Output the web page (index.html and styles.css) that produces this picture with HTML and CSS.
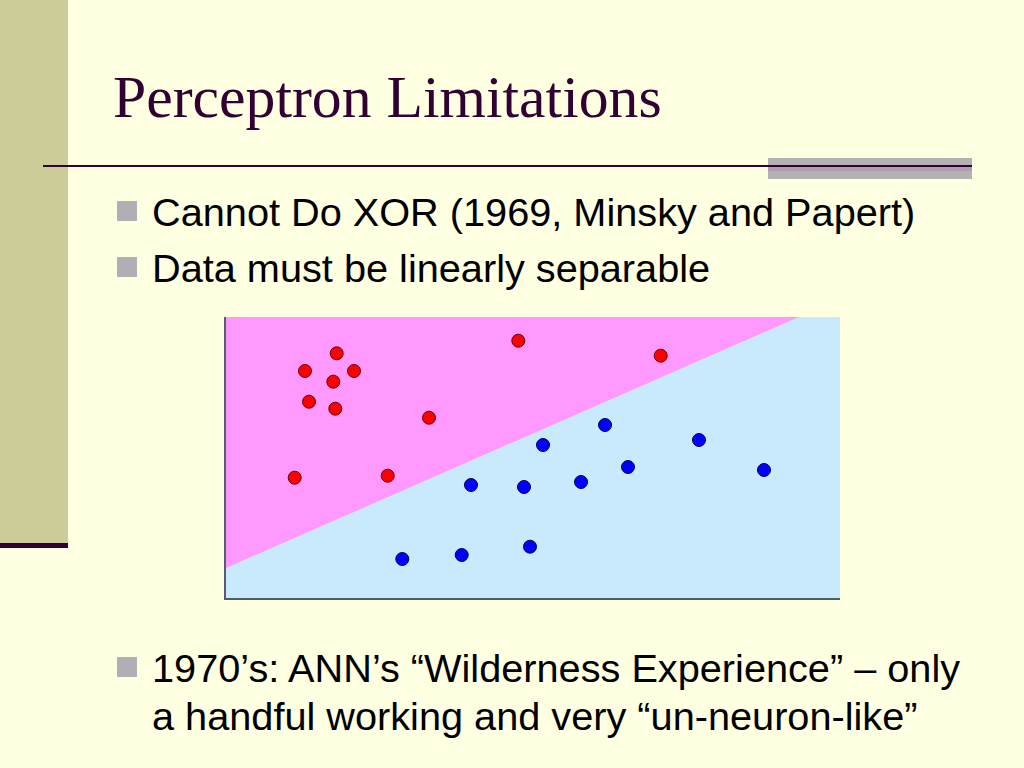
FILE: index.html
```html
<!DOCTYPE html>
<html lang="en">
<head>
<meta charset="utf-8">
<title>Perceptron Limitations</title>
<link rel="stylesheet" href="styles.css">
</head>
<body>
<div class="slide">
  <div class="sidebar"></div>
  <div class="main">
    <h1 class="title">Perceptron Limitations</h1>
    <div class="rule"></div>
    <ul class="bullets">
      <li>Cannot Do XOR (1969, Minsky and Papert)</li>
      <li>Data must be linearly separable</li>
    </ul>
    <div class="chart">
      <svg width="614" height="281" viewBox="0 0 614 281">
        <rect x="0" y="0" width="614" height="281" fill="#c9e9fd"/>
        <polygon points="0,0 573,0 0,251" fill="#ff99ff"/>
        <g fill="#ff0000" stroke="#6a0000" stroke-width="1">
          <circle cx="110.7" cy="36.3" r="6.5"/>
          <circle cx="79" cy="54" r="6.5"/>
          <circle cx="128" cy="54" r="6.5"/>
          <circle cx="107.3" cy="64.7" r="6.5"/>
          <circle cx="83" cy="84.7" r="6.5"/>
          <circle cx="109.3" cy="91.7" r="6.5"/>
          <circle cx="203" cy="100.7" r="6.5"/>
          <circle cx="68.7" cy="160.7" r="6.5"/>
          <circle cx="161.7" cy="158.7" r="6.5"/>
          <circle cx="292.3" cy="23.7" r="6.5"/>
          <circle cx="434.7" cy="38.7" r="6.5"/>
        </g>
        <g fill="#0000ff" stroke="#00005a" stroke-width="1">
          <circle cx="245" cy="168" r="6.5"/>
          <circle cx="298" cy="170" r="6.5"/>
          <circle cx="317" cy="128" r="6.5"/>
          <circle cx="355" cy="165" r="6.5"/>
          <circle cx="379" cy="108" r="6.5"/>
          <circle cx="402" cy="150" r="6.5"/>
          <circle cx="473" cy="123" r="6.5"/>
          <circle cx="538" cy="153" r="6.5"/>
          <circle cx="176.3" cy="242" r="6.5"/>
          <circle cx="235.7" cy="238" r="6.5"/>
          <circle cx="304" cy="229.7" r="6.5"/>
        </g>
      </svg>
    </div>
    <ul class="bullets bullets-last">
      <li>1970’s: ANN’s “Wilderness Experience” – only a handful working and very “un-neuron-like”</li>
    </ul>
  </div>
</div>
</body>
</html>
```

FILE: styles.css
```css
html, body {
  margin: 0;
  padding: 0;
  background: #ffffe1;
}

.slide {
  display: flex;
  align-items: flex-start;
  width: 1024px;
  height: 768px;
  overflow: hidden;
  background: #ffffe1;
}

.sidebar {
  flex: 0 0 68px;
  height: 543px;
  background: #cccc99;
  border-bottom: 5px solid #330033;
}

.main {
  flex: 1;
  padding: 63px 0 0 45px;
}

.title {
  margin: 0;
  font-family: "Liberation Serif", "Times New Roman", serif;
  font-weight: normal;
  font-size: 59.7px;
  line-height: 69px;
  color: #330033;
  white-space: nowrap;
}

.rule {
  margin: 26px 0 0 -70px;
  width: 929px;
  height: 21px;
  background:
    linear-gradient(#330033, #330033) 0 7px / 100% 2px no-repeat,
    linear-gradient(#b39ab3, #b39ab3) right 9px / 204px 4px no-repeat,
    linear-gradient(#b2b2b2, #b2b2b2) right 0 / 204px 21px no-repeat;
}

.bullets {
  list-style: none;
  margin: 9px 0 0 0;
  padding: 0;
  width: 867px;
  font-family: "Liberation Sans", Arial, sans-serif;
  font-size: 39.7px;
  line-height: 48px;
  color: #000;
}

.bullets li {
  display: grid;
  grid-template-columns: 39px 1fr;
}

.bullets li + li {
  margin-top: 8px;
}

.bullets li::before {
  content: "";
  display: block;
  width: 20px;
  height: 20px;
  margin: 13px 0 0 4px;
  background: #b0b0b4;
}

.chart {
  margin: 25px 0 0 111px;
  width: 614px;
  height: 281px;
  border-left: 2px solid #5a5a70;
  border-bottom: 2px solid #4e5e5e;
}

.chart svg {
  display: block;
}

.bullets-last {
  margin-top: 44px;
}
```
